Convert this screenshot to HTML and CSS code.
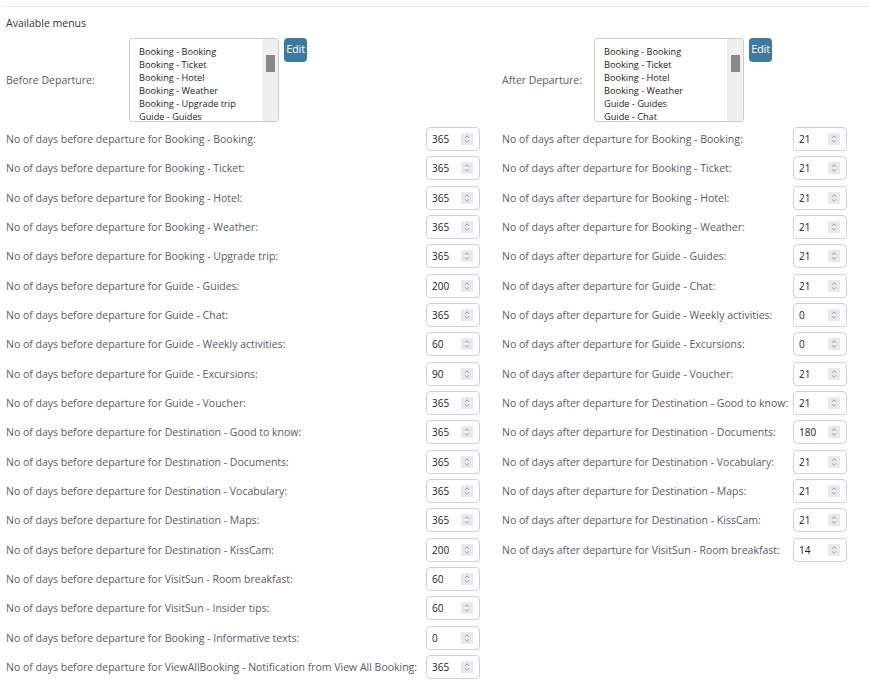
FILE: index.html
```html
<!DOCTYPE html>
<html lang="en">
<head>
<meta charset="utf-8">
<title>Available menus</title>
<link rel="stylesheet" href="styles.css">
</head>
<body>
<div class="page">
  <div class="rule"></div>
  <div class="content">
    <div class="title">Available menus</div>
    <div class="columns">
      <div class="col col-left">
        <div class="menu-row">
          <div class="menu-label">Before Departure:</div>
          <div class="listbox">
            <ul class="options">
              <li>Booking - Booking</li>
              <li>Booking - Ticket</li>
              <li>Booking - Hotel</li>
              <li>Booking - Weather</li>
              <li>Booking - Upgrade trip</li>
              <li>Guide - Guides</li>
            </ul>
            <div class="scrollbar"><div class="thumb"></div></div>
          </div>
          <button class="edit-btn" type="button">Edit</button>
        </div>
        <div class="days-grid">
          <label>No of days before departure for Booking - Booking:</label><div class="num"><span class="val">365</span><span class="spin"><svg viewBox="0 0 12 12" width="12" height="12"><path d="M4 4.6 L6 2.8 L8 4.6 M4 7.4 L6 9.2 L8 7.4" fill="none" stroke="#9a9aa2" stroke-width="0.9"/></svg></span></div>
          <label>No of days before departure for Booking - Ticket:</label><div class="num"><span class="val">365</span><span class="spin"><svg viewBox="0 0 12 12" width="12" height="12"><path d="M4 4.6 L6 2.8 L8 4.6 M4 7.4 L6 9.2 L8 7.4" fill="none" stroke="#9a9aa2" stroke-width="0.9"/></svg></span></div>
          <label>No of days before departure for Booking - Hotel:</label><div class="num"><span class="val">365</span><span class="spin"><svg viewBox="0 0 12 12" width="12" height="12"><path d="M4 4.6 L6 2.8 L8 4.6 M4 7.4 L6 9.2 L8 7.4" fill="none" stroke="#9a9aa2" stroke-width="0.9"/></svg></span></div>
          <label>No of days before departure for Booking - Weather:</label><div class="num"><span class="val">365</span><span class="spin"><svg viewBox="0 0 12 12" width="12" height="12"><path d="M4 4.6 L6 2.8 L8 4.6 M4 7.4 L6 9.2 L8 7.4" fill="none" stroke="#9a9aa2" stroke-width="0.9"/></svg></span></div>
          <label>No of days before departure for Booking - Upgrade trip:</label><div class="num"><span class="val">365</span><span class="spin"><svg viewBox="0 0 12 12" width="12" height="12"><path d="M4 4.6 L6 2.8 L8 4.6 M4 7.4 L6 9.2 L8 7.4" fill="none" stroke="#9a9aa2" stroke-width="0.9"/></svg></span></div>
          <label>No of days before departure for Guide - Guides:</label><div class="num"><span class="val">200</span><span class="spin"><svg viewBox="0 0 12 12" width="12" height="12"><path d="M4 4.6 L6 2.8 L8 4.6 M4 7.4 L6 9.2 L8 7.4" fill="none" stroke="#9a9aa2" stroke-width="0.9"/></svg></span></div>
          <label>No of days before departure for Guide - Chat:</label><div class="num"><span class="val">365</span><span class="spin"><svg viewBox="0 0 12 12" width="12" height="12"><path d="M4 4.6 L6 2.8 L8 4.6 M4 7.4 L6 9.2 L8 7.4" fill="none" stroke="#9a9aa2" stroke-width="0.9"/></svg></span></div>
          <label>No of days before departure for Guide - Weekly activities:</label><div class="num"><span class="val">60</span><span class="spin"><svg viewBox="0 0 12 12" width="12" height="12"><path d="M4 4.6 L6 2.8 L8 4.6 M4 7.4 L6 9.2 L8 7.4" fill="none" stroke="#9a9aa2" stroke-width="0.9"/></svg></span></div>
          <label>No of days before departure for Guide - Excursions:</label><div class="num"><span class="val">90</span><span class="spin"><svg viewBox="0 0 12 12" width="12" height="12"><path d="M4 4.6 L6 2.8 L8 4.6 M4 7.4 L6 9.2 L8 7.4" fill="none" stroke="#9a9aa2" stroke-width="0.9"/></svg></span></div>
          <label>No of days before departure for Guide - Voucher:</label><div class="num"><span class="val">365</span><span class="spin"><svg viewBox="0 0 12 12" width="12" height="12"><path d="M4 4.6 L6 2.8 L8 4.6 M4 7.4 L6 9.2 L8 7.4" fill="none" stroke="#9a9aa2" stroke-width="0.9"/></svg></span></div>
          <label>No of days before departure for Destination - Good to know:</label><div class="num"><span class="val">365</span><span class="spin"><svg viewBox="0 0 12 12" width="12" height="12"><path d="M4 4.6 L6 2.8 L8 4.6 M4 7.4 L6 9.2 L8 7.4" fill="none" stroke="#9a9aa2" stroke-width="0.9"/></svg></span></div>
          <label>No of days before departure for Destination - Documents:</label><div class="num"><span class="val">365</span><span class="spin"><svg viewBox="0 0 12 12" width="12" height="12"><path d="M4 4.6 L6 2.8 L8 4.6 M4 7.4 L6 9.2 L8 7.4" fill="none" stroke="#9a9aa2" stroke-width="0.9"/></svg></span></div>
          <label>No of days before departure for Destination - Vocabulary:</label><div class="num"><span class="val">365</span><span class="spin"><svg viewBox="0 0 12 12" width="12" height="12"><path d="M4 4.6 L6 2.8 L8 4.6 M4 7.4 L6 9.2 L8 7.4" fill="none" stroke="#9a9aa2" stroke-width="0.9"/></svg></span></div>
          <label>No of days before departure for Destination - Maps:</label><div class="num"><span class="val">365</span><span class="spin"><svg viewBox="0 0 12 12" width="12" height="12"><path d="M4 4.6 L6 2.8 L8 4.6 M4 7.4 L6 9.2 L8 7.4" fill="none" stroke="#9a9aa2" stroke-width="0.9"/></svg></span></div>
          <label>No of days before departure for Destination - KissCam:</label><div class="num"><span class="val">200</span><span class="spin"><svg viewBox="0 0 12 12" width="12" height="12"><path d="M4 4.6 L6 2.8 L8 4.6 M4 7.4 L6 9.2 L8 7.4" fill="none" stroke="#9a9aa2" stroke-width="0.9"/></svg></span></div>
          <label>No of days before departure for VisitSun - Room breakfast:</label><div class="num"><span class="val">60</span><span class="spin"><svg viewBox="0 0 12 12" width="12" height="12"><path d="M4 4.6 L6 2.8 L8 4.6 M4 7.4 L6 9.2 L8 7.4" fill="none" stroke="#9a9aa2" stroke-width="0.9"/></svg></span></div>
          <label>No of days before departure for VisitSun - Insider tips:</label><div class="num"><span class="val">60</span><span class="spin"><svg viewBox="0 0 12 12" width="12" height="12"><path d="M4 4.6 L6 2.8 L8 4.6 M4 7.4 L6 9.2 L8 7.4" fill="none" stroke="#9a9aa2" stroke-width="0.9"/></svg></span></div>
          <label>No of days before departure for Booking - Informative texts:</label><div class="num"><span class="val">0</span><span class="spin"><svg viewBox="0 0 12 12" width="12" height="12"><path d="M4 4.6 L6 2.8 L8 4.6 M4 7.4 L6 9.2 L8 7.4" fill="none" stroke="#9a9aa2" stroke-width="0.9"/></svg></span></div>
          <label>No of days before departure for ViewAllBooking - Notification from View All Booking:</label><div class="num"><span class="val">365</span><span class="spin"><svg viewBox="0 0 12 12" width="12" height="12"><path d="M4 4.6 L6 2.8 L8 4.6 M4 7.4 L6 9.2 L8 7.4" fill="none" stroke="#9a9aa2" stroke-width="0.9"/></svg></span></div>
        </div>
      </div>
      <div class="col col-right">
        <div class="menu-row">
          <div class="menu-label">After Departure:</div>
          <div class="listbox">
            <ul class="options">
              <li>Booking - Booking</li>
              <li>Booking - Ticket</li>
              <li>Booking - Hotel</li>
              <li>Booking - Weather</li>
              <li>Guide - Guides</li>
              <li>Guide - Chat</li>
            </ul>
            <div class="scrollbar"><div class="thumb"></div></div>
          </div>
          <button class="edit-btn" type="button">Edit</button>
        </div>
        <div class="days-grid">
          <label>No of days after departure for Booking - Booking:</label><div class="num"><span class="val">21</span><span class="spin"><svg viewBox="0 0 12 12" width="12" height="12"><path d="M4 4.6 L6 2.8 L8 4.6 M4 7.4 L6 9.2 L8 7.4" fill="none" stroke="#9a9aa2" stroke-width="0.9"/></svg></span></div>
          <label>No of days after departure for Booking - Ticket:</label><div class="num"><span class="val">21</span><span class="spin"><svg viewBox="0 0 12 12" width="12" height="12"><path d="M4 4.6 L6 2.8 L8 4.6 M4 7.4 L6 9.2 L8 7.4" fill="none" stroke="#9a9aa2" stroke-width="0.9"/></svg></span></div>
          <label>No of days after departure for Booking - Hotel:</label><div class="num"><span class="val">21</span><span class="spin"><svg viewBox="0 0 12 12" width="12" height="12"><path d="M4 4.6 L6 2.8 L8 4.6 M4 7.4 L6 9.2 L8 7.4" fill="none" stroke="#9a9aa2" stroke-width="0.9"/></svg></span></div>
          <label>No of days after departure for Booking - Weather:</label><div class="num"><span class="val">21</span><span class="spin"><svg viewBox="0 0 12 12" width="12" height="12"><path d="M4 4.6 L6 2.8 L8 4.6 M4 7.4 L6 9.2 L8 7.4" fill="none" stroke="#9a9aa2" stroke-width="0.9"/></svg></span></div>
          <label>No of days after departure for Guide - Guides:</label><div class="num"><span class="val">21</span><span class="spin"><svg viewBox="0 0 12 12" width="12" height="12"><path d="M4 4.6 L6 2.8 L8 4.6 M4 7.4 L6 9.2 L8 7.4" fill="none" stroke="#9a9aa2" stroke-width="0.9"/></svg></span></div>
          <label>No of days after departure for Guide - Chat:</label><div class="num"><span class="val">21</span><span class="spin"><svg viewBox="0 0 12 12" width="12" height="12"><path d="M4 4.6 L6 2.8 L8 4.6 M4 7.4 L6 9.2 L8 7.4" fill="none" stroke="#9a9aa2" stroke-width="0.9"/></svg></span></div>
          <label>No of days after departure for Guide - Weekly activities:</label><div class="num"><span class="val">0</span><span class="spin"><svg viewBox="0 0 12 12" width="12" height="12"><path d="M4 4.6 L6 2.8 L8 4.6 M4 7.4 L6 9.2 L8 7.4" fill="none" stroke="#9a9aa2" stroke-width="0.9"/></svg></span></div>
          <label>No of days after departure for Guide - Excursions:</label><div class="num"><span class="val">0</span><span class="spin"><svg viewBox="0 0 12 12" width="12" height="12"><path d="M4 4.6 L6 2.8 L8 4.6 M4 7.4 L6 9.2 L8 7.4" fill="none" stroke="#9a9aa2" stroke-width="0.9"/></svg></span></div>
          <label>No of days after departure for Guide - Voucher:</label><div class="num"><span class="val">21</span><span class="spin"><svg viewBox="0 0 12 12" width="12" height="12"><path d="M4 4.6 L6 2.8 L8 4.6 M4 7.4 L6 9.2 L8 7.4" fill="none" stroke="#9a9aa2" stroke-width="0.9"/></svg></span></div>
          <label>No of days after departure for Destination - Good to know:</label><div class="num"><span class="val">21</span><span class="spin"><svg viewBox="0 0 12 12" width="12" height="12"><path d="M4 4.6 L6 2.8 L8 4.6 M4 7.4 L6 9.2 L8 7.4" fill="none" stroke="#9a9aa2" stroke-width="0.9"/></svg></span></div>
          <label>No of days after departure for Destination - Documents:</label><div class="num"><span class="val">180</span><span class="spin"><svg viewBox="0 0 12 12" width="12" height="12"><path d="M4 4.6 L6 2.8 L8 4.6 M4 7.4 L6 9.2 L8 7.4" fill="none" stroke="#9a9aa2" stroke-width="0.9"/></svg></span></div>
          <label>No of days after departure for Destination - Vocabulary:</label><div class="num"><span class="val">21</span><span class="spin"><svg viewBox="0 0 12 12" width="12" height="12"><path d="M4 4.6 L6 2.8 L8 4.6 M4 7.4 L6 9.2 L8 7.4" fill="none" stroke="#9a9aa2" stroke-width="0.9"/></svg></span></div>
          <label>No of days after departure for Destination - Maps:</label><div class="num"><span class="val">21</span><span class="spin"><svg viewBox="0 0 12 12" width="12" height="12"><path d="M4 4.6 L6 2.8 L8 4.6 M4 7.4 L6 9.2 L8 7.4" fill="none" stroke="#9a9aa2" stroke-width="0.9"/></svg></span></div>
          <label>No of days after departure for Destination - KissCam:</label><div class="num"><span class="val">21</span><span class="spin"><svg viewBox="0 0 12 12" width="12" height="12"><path d="M4 4.6 L6 2.8 L8 4.6 M4 7.4 L6 9.2 L8 7.4" fill="none" stroke="#9a9aa2" stroke-width="0.9"/></svg></span></div>
          <label>No of days after departure for VisitSun - Room breakfast:</label><div class="num"><span class="val">14</span><span class="spin"><svg viewBox="0 0 12 12" width="12" height="12"><path d="M4 4.6 L6 2.8 L8 4.6 M4 7.4 L6 9.2 L8 7.4" fill="none" stroke="#9a9aa2" stroke-width="0.9"/></svg></span></div>
        </div>
      </div>
    </div>
  </div>
</div>
</body>
</html>
```

FILE: styles.css
```css
html, body {
  margin: 0;
  padding: 0;
  background: #ffffff;
}

body {
  font-family: "Open Sans", "Liberation Sans", sans-serif;
  font-size: 10.5px;
  color: #5a5a5e;
}

.page {
  padding: 6px 0 0 3px;
}

.rule {
  height: 1px;
  background: #e4e4e4;
}

.content {
  padding-left: 3px;
}

.title {
  margin-top: 8.5px;
  margin-bottom: 4.5px;
  line-height: 15px;
  color: #333;
}

.columns {
  display: flex;
  gap: 22px;
  align-items: flex-start;
}

.menu-row {
  display: flex;
  align-items: flex-start;
  padding: 2.67px 0;
}

.menu-label {
  align-self: center;
  line-height: 15px;
  padding-top: 1px;
}

.col-left .menu-label {
  width: 123px;
}

.col-right .menu-label {
  width: 92px;
}

.listbox {
  display: flex;
  width: 150px;
  height: 84px;
  box-sizing: border-box;
  border: 1px solid #cbcbcf;
  border-radius: 3px;
  overflow: hidden;
}

.options {
  flex: 1;
  list-style: none;
  margin: 0;
  padding: 6.5px 0 0 9px;
  font-size: 9.2px;
  line-height: 13px;
  color: #222;
  white-space: nowrap;
  overflow: hidden;
}

.scrollbar {
  width: 16px;
  background: #f0f0f0;
  padding-top: 16.5px;
  display: flex;
  justify-content: center;
}

.thumb {
  width: 9px;
  height: 17px;
  background: #898989;
}

.edit-btn {
  margin-left: 5px;
  width: 23px;
  height: 24px;
  padding: 0 0 3px;
  border: none;
  border-radius: 4px;
  background: #3c7a9e;
  color: #fff;
  font-family: inherit;
  font-size: 11px;
  line-height: 15px;
  letter-spacing: -0.2px;
}

.days-grid {
  display: grid;
  grid-auto-rows: 29.33px;
  align-items: center;
}

.col-left .days-grid {
  grid-template-columns: 420px 54px;
}

.col-right .days-grid {
  grid-template-columns: 291px 54px;
}

.days-grid label {
  line-height: 15px;
  padding-top: 1px;
  white-space: nowrap;
}

.num {
  display: flex;
  align-items: center;
  justify-content: space-between;
  height: 24px;
  box-sizing: border-box;
  border: 1px solid #d0d0d6;
  border-radius: 4px;
  padding: 0 6px 0 5px;
}

.val {
  font-size: 10px;
  color: #222;
}

.spin {
  display: block;
  width: 12px;
  height: 12px;
  background: #e8e8ed;
  border-radius: 1px;
}

.spin svg {
  display: block;
}
```
